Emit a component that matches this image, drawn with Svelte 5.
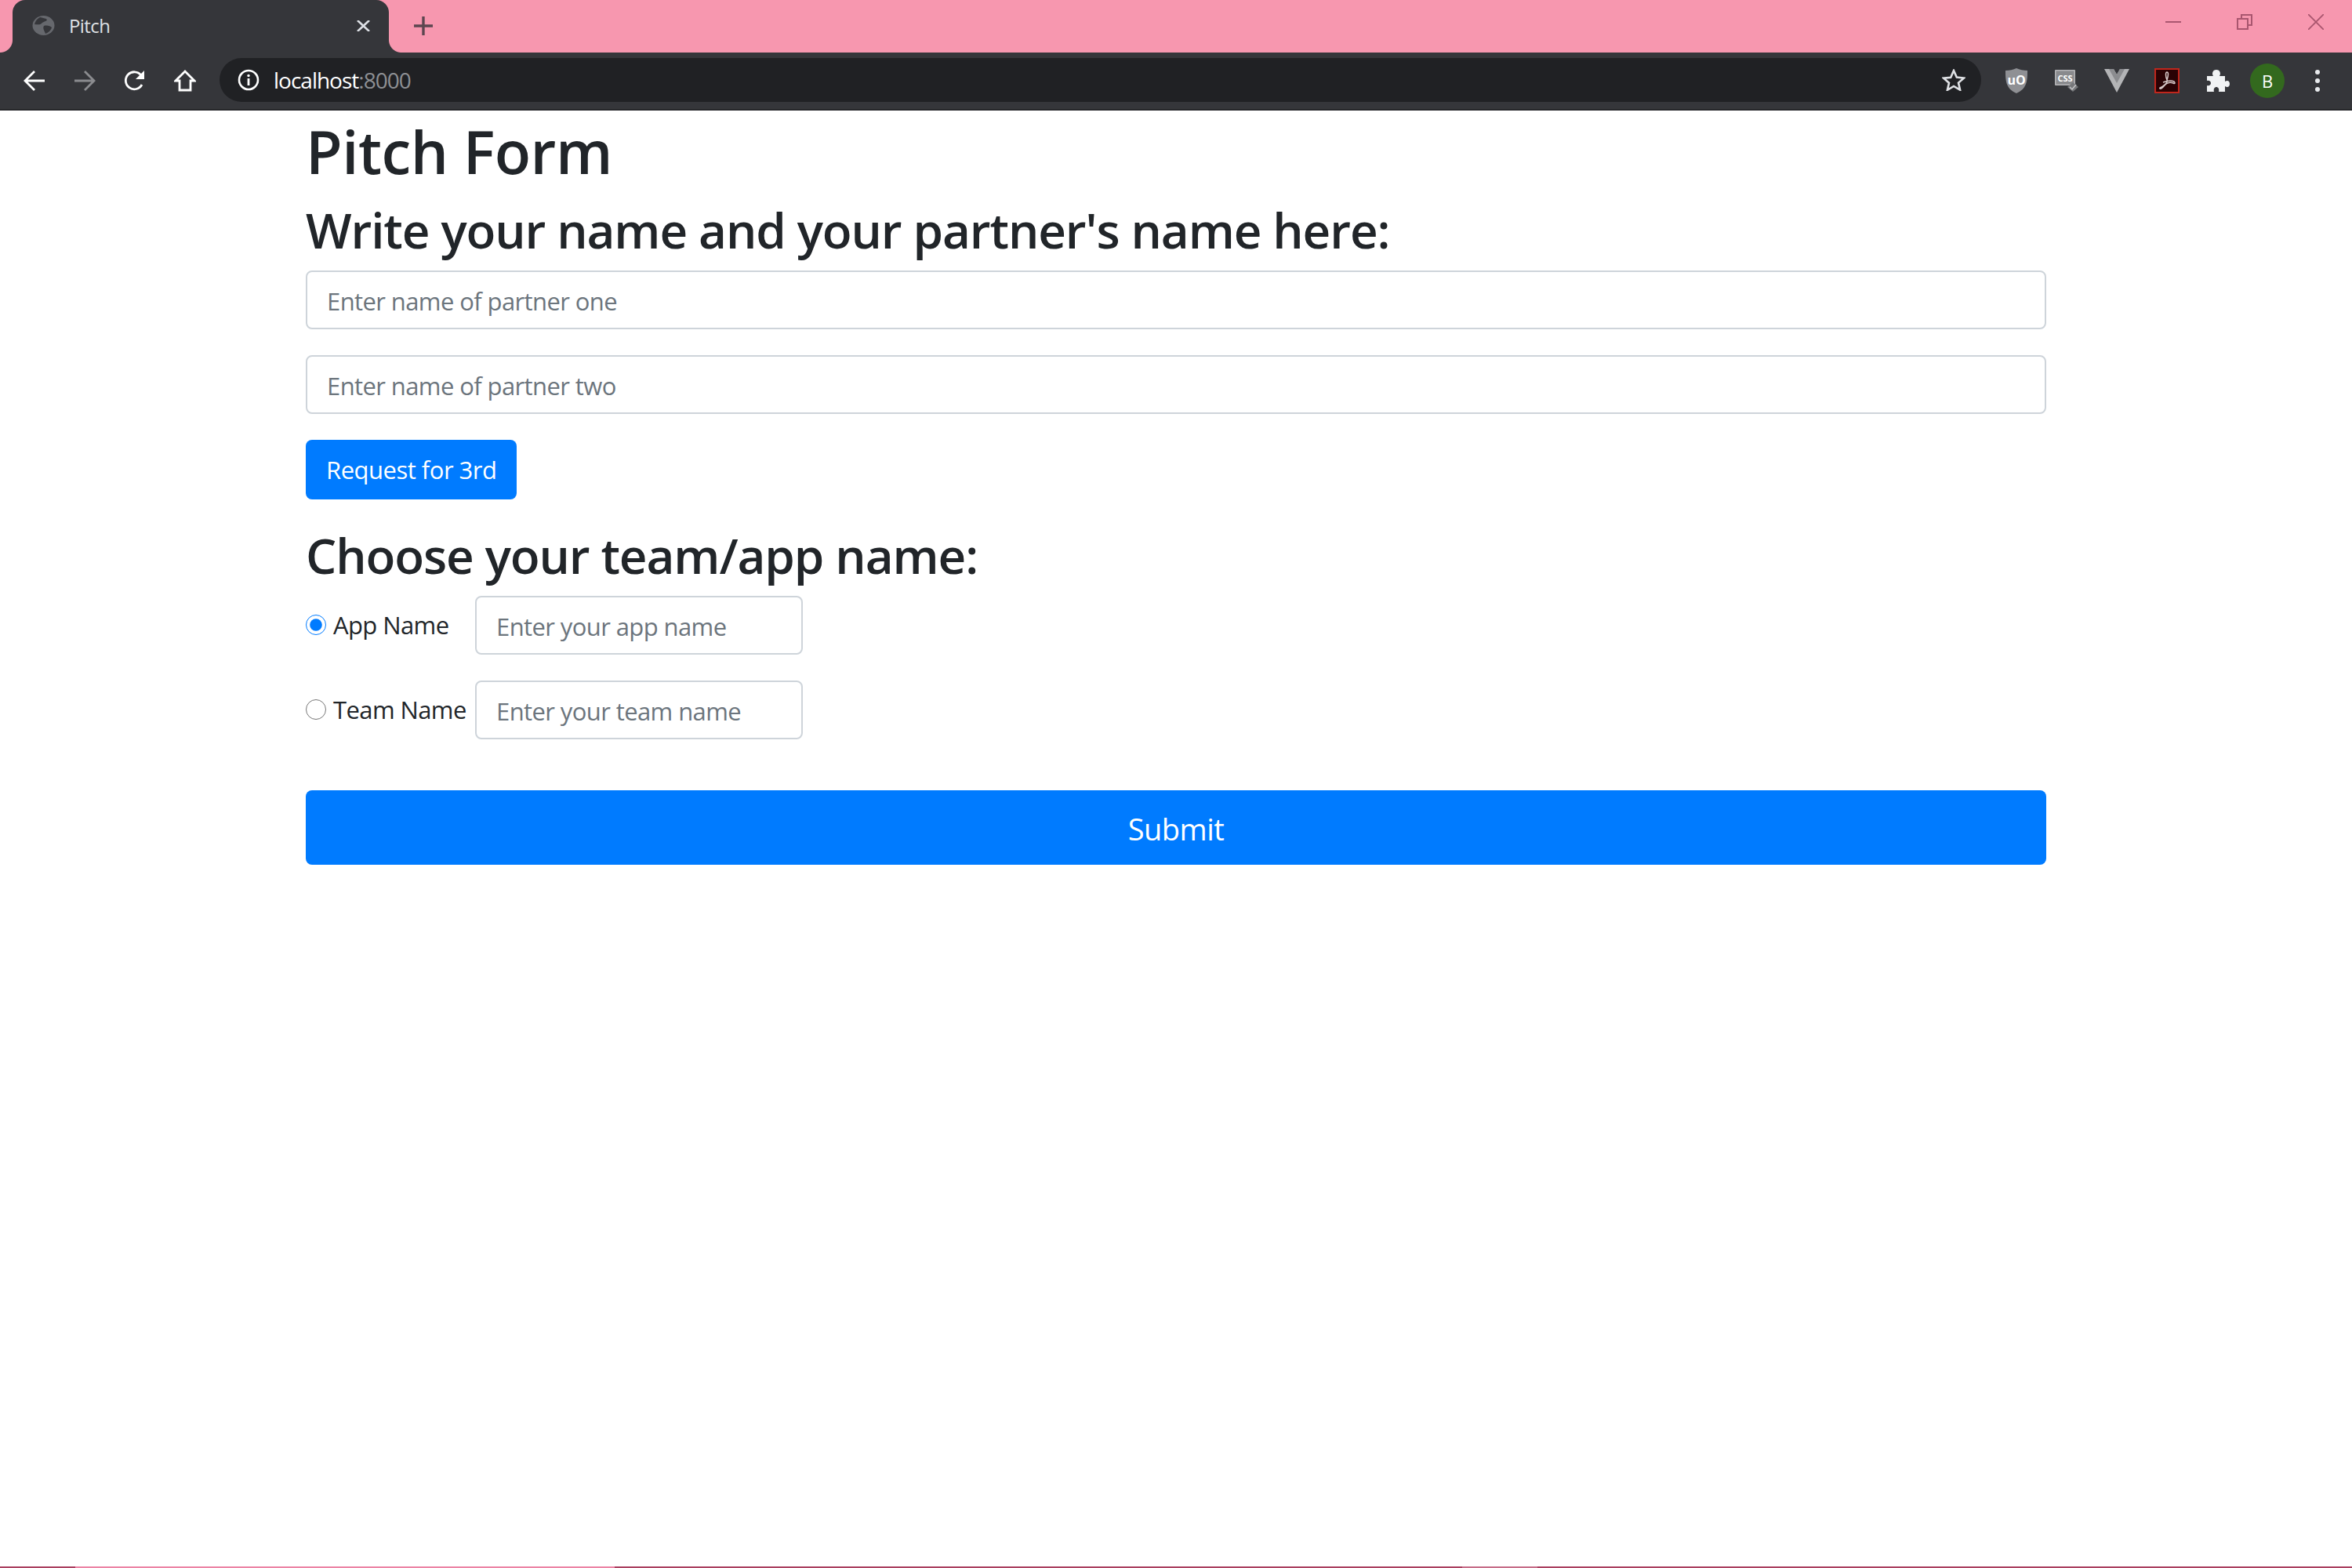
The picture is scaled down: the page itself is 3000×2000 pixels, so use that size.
<script>
  let team = $state("app");
</script>

<div class="window">
  <header class="tabbar">
    <div class="tab">
      <svg class="favicon" viewBox="0 0 29 25" width="29" height="25">
        <ellipse cx="14.5" cy="12.5" rx="14" ry="12.5" fill="#66686d" />
        <path d="M10 2c3 1 7 1 9 3-1 3-5 2-7 5-2 2-6 1-9 1 1-4 3-7 7-9zM15 13c4-1 8 0 10 2-1 4-5 7-8 8-1-3-4-7-2-10z" fill="#35363a" />
      </svg>
      <span class="tab-title">Pitch</span>
      <svg class="tab-close" viewBox="0 0 17 14" width="17" height="14">
        <path d="M1 0l15 14M16 0L1 14" stroke="#dee1e6" stroke-width="2.6" fill="none" />
      </svg>
    </div>
    <svg class="new-tab" viewBox="0 0 24 24" width="24" height="24">
      <path d="M12 0v24M0 12h24" stroke="#5d4650" stroke-width="3.4" fill="none" />
    </svg>
    <div class="win-buttons">
      <svg viewBox="0 0 20 20" width="20" height="20"><path d="M0 10h20" stroke="#a9566f" stroke-width="2" /></svg>
      <svg viewBox="0 0 20 20" width="20" height="20">
        <path d="M1 6h13v13H1zM6 6V1h13v13h-5" stroke="#a9566f" stroke-width="2" fill="none" />
      </svg>
      <svg viewBox="0 0 20 20" width="20" height="20"><path d="M0 0l20 20M20 0L0 20" stroke="#a9566f" stroke-width="1.8" /></svg>
    </div>
  </header>

  <nav class="toolbar">
    <div class="nav-buttons">
      <svg viewBox="0 0 28 26" width="28" height="26">
        <path d="M27 13H3M14 1L2 13l12 12" stroke="#fff" stroke-width="2.8" fill="none" />
      </svg>
      <svg viewBox="0 0 28 26" width="28" height="26">
        <path d="M1 13h24M14 1l12 12-12 12" stroke="#8b8c8f" stroke-width="2.8" fill="none" />
      </svg>
      <svg viewBox="0 0 28 28" width="28" height="28">
        <path d="M23 19a11 11 0 1 1-1-12" stroke="#fff" stroke-width="2.8" fill="none" />
        <path d="M26 1v11H15z" fill="#fff" />
      </svg>
      <svg class="home" viewBox="0 0 28 28" width="28" height="28">
        <path d="M14 2L2 14h5v12h14V14h5z" stroke="#fff" stroke-width="2.8" fill="none" stroke-linejoin="miter" />
      </svg>
    </div>
    <div class="omnibox">
      <svg class="info" viewBox="0 0 28 28" width="28" height="28">
        <circle cx="14" cy="14" r="12" stroke="#fff" stroke-width="2.6" fill="none" />
        <path d="M14 12v9" stroke="#fff" stroke-width="2.8" />
        <circle cx="14" cy="8.5" r="1.7" fill="#fff" />
      </svg>
      <span class="url">localhost<span class="port">:8000</span></span>
      <svg class="star" viewBox="0 0 30 28" width="30" height="28">
        <path d="M15 2l3.8 8.6 9.2.9-7 6.1 2.1 9.1L15 22l-8.100 4.800 2.100-9.100-7-6.100 9.200-.9z" stroke="#dfe1e5" stroke-width="2.6" fill="none" />
      </svg>
    </div>
    <div class="extensions">
      <svg class="ext-ublock" viewBox="0 0 28 32" width="28" height="32">
        <path d="M14 0c4 2 9 3 14 3 0 12 0 23-14 29C0 26 0 15 0 3c5 0 10-1 14-3z" fill="#8f9094" />
        <text x="14" y="21" text-anchor="middle" class="ext-text">uO</text>
      </svg>
      <svg class="ext-css" viewBox="0 0 30 28" width="30" height="28">
        <rect x="0" y="0" width="26" height="20" rx="1" fill="#b4b5b7" />
        <rect x="1.500" y="1.500" width="23" height="17" fill="#898a8d" />
        <text x="13" y="14.500" text-anchor="middle" class="ext-text css">CSS</text>
        <path d="M23 16l7 6-7 6-7-6z" fill="#77787b" />
        <path d="M19 22l3 3 5-6" stroke="#c4c5c7" stroke-width="1.500" fill="none" />
      </svg>
      <svg class="ext-vue" viewBox="0 0 32 30" width="32" height="30">
        <path d="M0 0h12l4 7 4-7h12L16 30z" fill="#b3b4b6" />
        <path d="M6 0h6l4 7 4-7h6L16 18z" fill="#8b8c8f" />
      </svg>
      <svg class="ext-adobe" viewBox="0 0 32 32" width="32" height="32">
        <rect x="1" y="1" width="30" height="30" fill="#2a0204" stroke="#c0261c" stroke-width="2" />
        <path d="M16 5c-2 0-2 5 0 10 1.500 4-6 9-9 10-1 1 1 2 3 0 3-3 7-9 14-6 2 1 3 0 1-2-4-2-9-1-14 1M16 5c2 0 2 4 0 10" stroke="#d8c9c9" stroke-width="1.500" fill="none" />
      </svg>
      <svg class="ext-puzzle" viewBox="0 0 30 30" width="30" height="30">
        <path d="M1 9h8c-2-3-1-8 4-8s6 5 4 8h7v7c3-2 6-1 6 3s-3 5-6 3v7h-8c1-4-1-6-3-6s-4 2-3 6H1v-8c3 1 5-1 5-3s-2-4-5-3z" fill="#f1f3f4" />
      </svg>
      <div class="avatar">B</div>
      <svg class="menu-dots" viewBox="0 0 6 28" width="6" height="28">
        <circle cx="3" cy="3" r="3" fill="#e8eaed" />
        <circle cx="3" cy="14" r="3" fill="#e8eaed" />
        <circle cx="3" cy="25" r="3" fill="#e8eaed" />
      </svg>
    </div>
  </nav>

  <main class="container">
    <h1>Pitch Form</h1>
    <h2>Write your name and your partner's name here:</h2>
    <input class="field" type="text" placeholder="Enter name of partner one" />
    <input class="field" type="text" placeholder="Enter name of partner two" />
    <button class="btn" type="button">Request for 3rd</button>

    <h2 class="team-heading">Choose your team/app name:</h2>
    <div class="choice">
      <label class="radio"><input type="radio" name="team" value="app" bind:group={team} />App Name</label>
      <input class="field small" type="text" placeholder="Enter your app name" />
    </div>
    <div class="choice">
      <label class="radio"><input type="radio" name="team" value="team" bind:group={team} />Team Name</label>
      <input class="field small" type="text" placeholder="Enter your team name" />
    </div>
    <button class="btn block" type="button">Submit</button>
  </main>

  <footer class="taskbar-edge">
    <i class="seg" style="width: 96px"></i>
    <i class="seg pink" style="width: 688px"></i>
    <i class="seg" style="width: 1081px"></i>
    <i class="seg light" style="width: 96px"></i>
    <i class="seg grow"></i>
  </footer>
</div>

<style>
  :global(body) {
    background: #fff;
    overflow: hidden;
  }
  .window {
    display: flex;
    flex-direction: column;
    height: 2000px;
    font-family: "Open Sans", "Noto Sans", sans-serif;
    color: #212529;
  }

  .tabbar {
    display: flex;
    align-items: center;
    height: 67px;
    flex: none;
    background: #f797af;
    padding-left: 16px;
  }
  .tab {
    position: relative;
    display: flex;
    align-items: center;
    box-sizing: border-box;
    width: 480px;
    height: 67px;
    padding: 0 24px 2px 25px;
    background: #35363a;
    border-radius: 16px 16px 0 0;
  }
  .tab::before,
  .tab::after {
    content: "";
    position: absolute;
    bottom: 0;
    width: 16px;
    height: 16px;
    background: radial-gradient(circle at 0 0, #f797af 15.500px, #35363a 16.500px);
  }
  .tab::before {
    left: -16px;
  }
  .tab::after {
    right: -16px;
    transform: scaleX(-1);
  }
  .favicon {
    margin-top: -1px;
  }
  .tab-title {
    margin-left: 18px;
    font-size: 24px;
    letter-spacing: -0.6px;
    color: #dfe1e5;
  }
  .tab-close {
    margin-left: auto;
  }
  .new-tab {
    margin-left: 32px;
    margin-bottom: 2px;
  }
  .win-buttons {
    display: flex;
    gap: 71px;
    margin-left: auto;
    margin-right: 36px;
    margin-top: -12px;
  }

  .toolbar {
    display: flex;
    align-items: center;
    flex: none;
    box-sizing: border-box;
    height: 74px;
    background: #35363a;
    border-bottom: 2px solid #26272a;
    padding: 0 0 0 30px;
  }
  .nav-buttons {
    display: flex;
    align-items: center;
    gap: 36px;
    width: 250px;
  }
  .omnibox {
    display: flex;
    align-items: center;
    box-sizing: border-box;
    width: 2247px;
    height: 56px;
    margin-top: -2px;
    padding: 0 20px 0 23px;
    background: #202124;
    border-radius: 28px;
  }
  .url {
    margin-left: 18px;
    font-size: 28px;
    letter-spacing: -1px;
    color: #fff;
  }
  .port {
    color: #8e9094;
  }
  .star {
    margin-left: auto;
  }
  .extensions {
    display: flex;
    align-items: center;
    margin-left: 31px;
  }
  .ext-css {
    margin-left: 35px;
  }
  .ext-vue {
    margin-left: 33px;
  }
  .ext-adobe {
    margin-left: 32px;
  }
  .ext-puzzle {
    margin-left: 34px;
  }
  .ext-text {
    font-size: 16px;
    font-weight: 700;
    fill: #fff;
  }
  .ext-text.css {
    font-size: 11px;
  }
  .avatar {
    display: flex;
    align-items: center;
    justify-content: center;
    width: 44px;
    height: 44px;
    margin-left: 26px;
    border-radius: 50%;
    background: #33691e;
    color: #fff;
    font-size: 22px;
  }
  .menu-dots {
    margin-left: 39px;
  }

  .container {
    display: flex;
    flex-direction: column;
    align-items: flex-start;
    box-sizing: border-box;
    width: 2220px;
    margin: 0 auto;
    flex: 1;
  }
  h1 {
    margin: 4px 0 1px;
    font-size: 76px;
    line-height: 96px;
    font-weight: 600;
    letter-spacing: -0.5px;
  }
  h2 {
    margin: 0 0 1px;
    font-size: 62px;
    line-height: 102px;
    font-weight: 600;
    letter-spacing: -1.1px;
  }
  .team-heading {
    margin: 20px 0 1px;
  }
  .field {
    box-sizing: border-box;
    width: 100%;
    height: 75px;
    margin-bottom: 33px;
    padding: 2px 25px 0;
    font: 31px "Open Sans", "Noto Sans", sans-serif;
    letter-spacing: -0.6px;
    color: #495057;
    background: #fff;
    border: 2px solid #ced4da;
    border-radius: 8px;
    outline: none;
  }
  .field::placeholder {
    color: #6c757d;
    opacity: 1;
  }
  .btn {
    height: 76px;
    padding: 0 26px;
    font: 31px "Open Sans", "Noto Sans", sans-serif;
    letter-spacing: -0.5px;
    color: #fff;
    background: #007bff;
    border: none;
    border-radius: 8px;
  }
  .btn.block {
    width: 100%;
    height: 95px;
    margin-top: 32px;
    padding-top: 2px;
    font-size: 38px;
  }
  .choice {
    display: flex;
    align-items: flex-start;
  }
  .radio {
    display: flex;
    align-items: center;
    gap: 9px;
    width: 216px;
    height: 74px;
    font-size: 31px;
    letter-spacing: -0.6px;
    white-space: nowrap;
  }
  .radio input {
    width: 26px;
    height: 26px;
    margin: 0;
    accent-color: #007bff;
  }
  .field.small {
    width: 418px;
  }

  .taskbar-edge {
    display: flex;
    flex: none;
    height: 2px;
  }
  .seg {
    background: #aa4060;
  }
  .seg.pink {
    background: #ec84a5;
  }
  .seg.light {
    background: #c66d88;
  }
  .seg.grow {
    flex: 1;
  }
</style>
